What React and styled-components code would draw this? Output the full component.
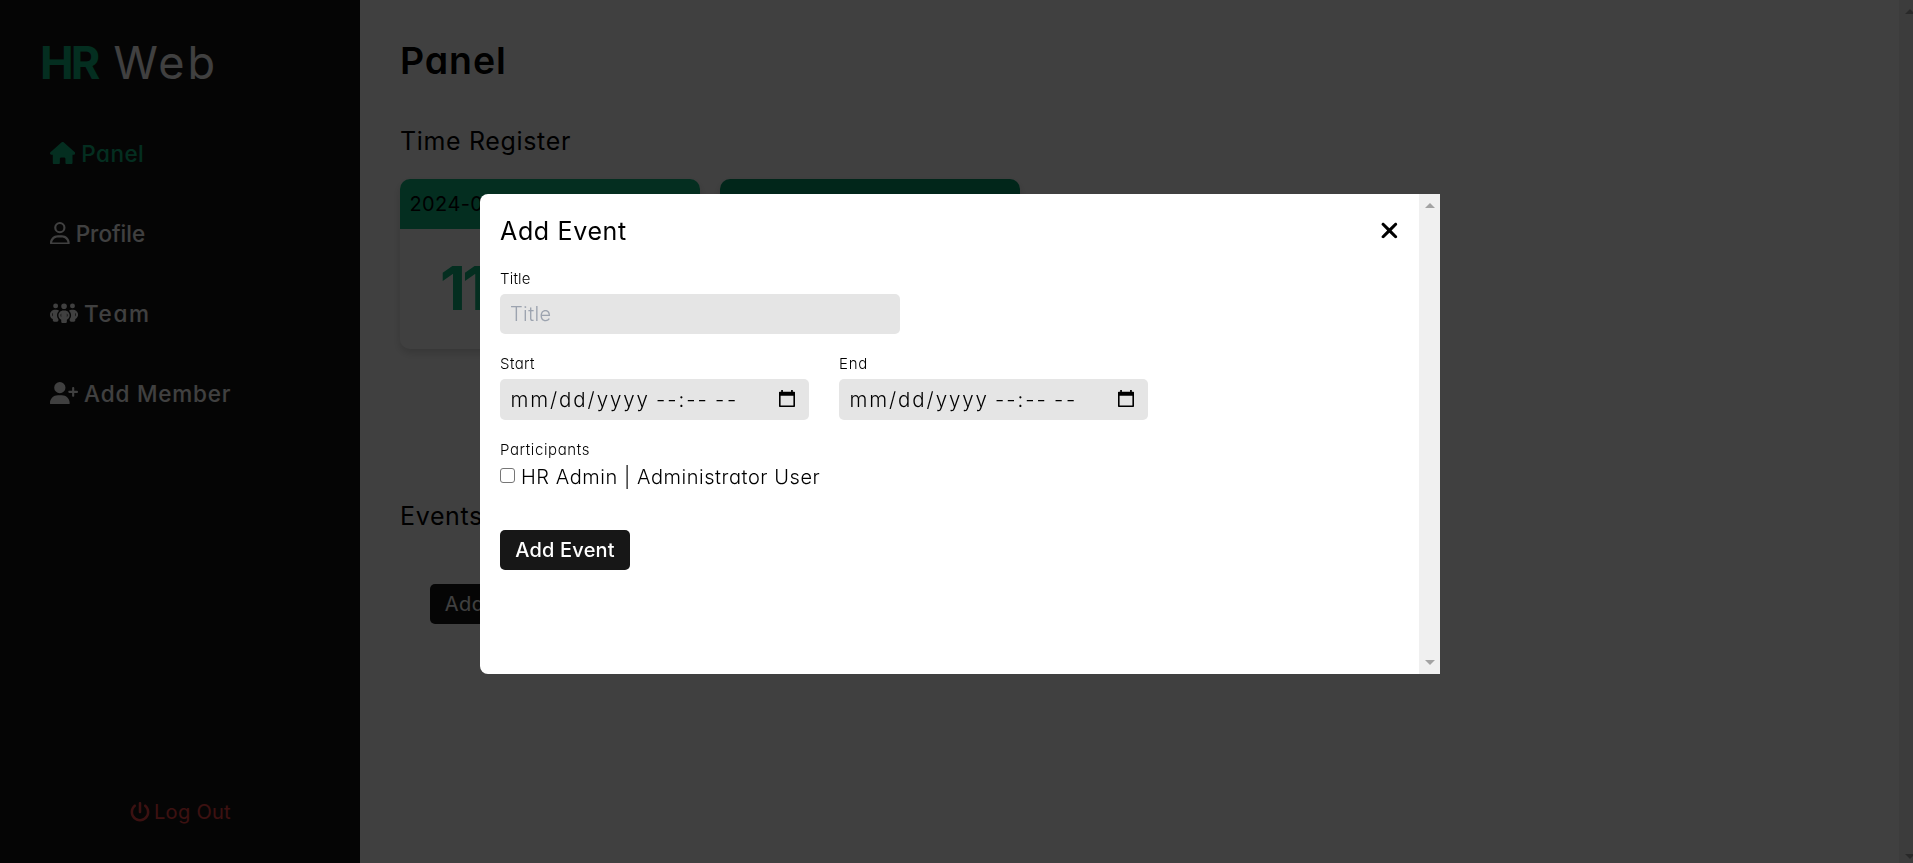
import React from "react";
import styled, { createGlobalStyle, css } from "styled-components";
import { FaHouse, FaRegUser, FaPeopleGroup, FaUserPlus, FaPowerOff, FaXmark } from "react-icons/fa6";

const GlobalStyle = createGlobalStyle`
  *, *::before, *::after { box-sizing: border-box; }
  html, body { margin: 0; height: 100%; overflow: hidden; background: #fff; }
  body {
    font-family: Inter, "Open Sans", sans-serif;
    font-feature-settings: "cv11" 1;
    color: #000;
  }
  h1, h2 { margin: 0; }
`;

const Screen = styled.div`
  display: flex;
  width: 1920px;
  height: 868px;
`;

/* ---------- sidebar ---------- */

const Sidebar = styled.aside`
  display: flex;
  flex-direction: column;
  flex: 0 0 360px;
  padding: 33px 40px 41px;
  background: #171717;
  color: #fff;
`;

const Brand = styled.div`
  display: flex;
  height: 60px;
  margin-bottom: 20px;
  font-size: 45px;
  line-height: 60px;
`;

const BrandMark = styled.span`
  width: 73.5px;
  color: #10b981;
  font-weight: 700;
  letter-spacing: -2.8px;
`;

const BrandName = styled.span`
  letter-spacing: 2.8px;
`;

const Nav = styled.nav`
  display: flex;
  flex-direction: column;
  padding-left: 10px;
`;

const NavItem = styled.a`
  display: flex;
  align-items: center;
  gap: 6px;
  height: 80px;
  color: ${(p) => (p.$active ? "#10b981" : "#fff")};
  font-size: 22.5px;
  font-weight: 500;
  letter-spacing: ${(p) => p.$track}px;
  white-space: nowrap;

  svg {
    flex: none;
    width: ${(p) => p.$iconWidth}px;
    height: 22.5px;
  }
`;

const LogOut = styled.a`
  display: flex;
  align-items: center;
  gap: 4.5px;
  height: 30px;
  margin: auto 0 0 89.5px;
  color: #ef4444;
  font-size: 20px;
  letter-spacing: 0.3px;

  svg { width: 20px; height: 20px; }
`;

/* ---------- main page ---------- */

const Main = styled.main`
  display: flex;
  flex: 1;
  flex-direction: column;
  padding: 33px 40px 0;
`;

const PageTitle = styled.h1`
  margin-bottom: 33px;
  font-size: 37.5px;
  line-height: 56px;
  font-weight: 600;
  letter-spacing: 0.9px;
`;

const SectionTitle = styled.h2`
  font-size: 25px;
  line-height: 38px;
  font-weight: 400;
  letter-spacing: 0.65px;
`;

const CardRow = styled.div`
  display: flex;
  gap: 20px;
  margin: 19px 0 147.5px;
`;

const Card = styled.section`
  width: 300px;
  height: 170px;
  overflow: hidden;
  border-radius: 10px;
  background: #fff;
  box-shadow: 0 4px 8px rgba(0, 0, 0, 0.16);
`;

const CardHeader = styled.div`
  height: 50px;
  padding-left: 9.5px;
  background: ${(p) => p.$color};
  font-size: 20px;
  line-height: 50px;
  letter-spacing: 0.4px;
`;

const CardValue = styled.div`
  padding-left: 40px;
  color: #10b981;
  font-size: 60px;
  font-weight: 700;
  line-height: 118px;
  letter-spacing: -3.5px;
`;

const buttonStyle = css`
  display: block;
  width: 130px;
  height: 40px;
  padding: 0;
  border: 0;
  border-radius: 5px;
  background: #171717;
  color: #fff;
  font-family: inherit;
  font-feature-settings: inherit;
  font-size: 20px;
  white-space: nowrap;
`;

const PageButton = styled.button`
  ${buttonStyle}
  margin: 49px 0 0 30px;
  letter-spacing: 0.4px;
`;

const SubmitButton = styled.button`
  ${buttonStyle}
  margin-top: 38px;
  font-weight: 500;
  letter-spacing: 0.2px;
`;

/* ---------- scrollbars ---------- */

const ScrollTrack = styled.div`
  display: flex;
  flex: 0 0 21px;
  flex-direction: column;
  align-items: center;
  justify-content: space-between;
  padding: 9px 0;
  background: #f0f0f0;
`;

const ScrollArrow = styled.span`
  width: 0;
  height: 0;
  border: 5px solid transparent;
  ${(p) =>
    p.$up
      ? "border-top: 0; border-bottom-color: #a3a3a3;"
      : "border-bottom: 0; border-top-color: #a3a3a3;"}
`;

const Scrollbar = () => (
  <ScrollTrack>
    <ScrollArrow $up />
    <ScrollArrow />
  </ScrollTrack>
);

/* ---------- modal ---------- */

const Overlay = styled.div`
  position: fixed;
  top: 0;
  left: 0;
  display: flex;
  align-items: center;
  justify-content: center;
  width: 1920px;
  height: 868px;
  background: rgba(0, 0, 0, 0.75);
`;

const Modal = styled.div`
  display: flex;
  width: 960px;
  height: 480px;
  overflow: hidden;
  border-radius: 8px 0 0 8px;
  background: #fff;
`;

const ModalBody = styled.form`
  flex: 1;
  padding: 17.5px 20px 0;
`;

const ModalHeader = styled.div`
  display: flex;
  align-items: center;
  justify-content: space-between;
  height: 38px;
  margin-bottom: 18px;

  svg {
    width: 18.75px;
    height: 25px;
  }
`;

const Field = styled.div`
  display: flex;
  flex-direction: column;
  width: ${(p) => p.$width}px;
  margin-bottom: 19px;
`;

const Label = styled.label`
  display: block;
  margin-bottom: 4px;
  font-size: 15px;
  font-weight: 300;
  line-height: 22px;
  letter-spacing: ${(p) => p.$track}px;
`;

const GroupLabel = styled(Label)`
  margin-bottom: 0.5px;
`;

const TextInput = styled.input`
  height: 40px;
  padding: 0 10px;
  border: 0;
  border-radius: 5px;
  background: #e5e5e5;
  font-family: inherit;
  font-feature-settings: inherit;
  font-size: 20px;
  font-weight: 300;
  letter-spacing: 0.4px;

  &::placeholder { color: #9ca3af; opacity: 1; }
`;

const FieldRow = styled.div`
  display: flex;
  gap: 30px;
`;

const DateBox = styled.div`
  display: flex;
  align-items: center;
  height: 41.5px;
  padding: 0 12px 0 10.5px;
  border-radius: 5px;
  background: #e5e5e5;
  font-size: 20.5px;
  font-weight: 300;
  white-space: nowrap;

  svg { margin-left: auto; }
`;

const DatePart = styled.span`
  width: ${(p) => p.$width}px;
  letter-spacing: ${(p) => p.$track}px;
`;

const CheckRow = styled.label`
  display: flex;
  align-items: center;
  height: 30px;
  font-size: 20px;
  font-weight: 300;
  letter-spacing: 0.55px;
`;

const Checkbox = styled.input`
  width: 15px;
  height: 15px;
  margin: 0 6px 3px 0;
  appearance: none;
  border: 1px solid #767676;
  border-radius: 3px;
  background: #fff;
`;

const CalendarIcon = () => (
  <svg width="20" height="20" viewBox="0 0 20 20" fill="none">
    <path d="M2.8 3.5h14.4v13.7H2.8z" stroke="#000" strokeWidth="1.6" strokeLinejoin="round" />
    <path d="M2 3.5h16v3.3H2zM4.2 1h1.7v3H4.2zM14.1 1h1.7v3h-1.7z" fill="#000" />
  </svg>
);

const DateField = ({ label, track }) => (
  <Field $width={309}>
    <Label $track={track}>{label}</Label>
    <DateBox>
      <DatePart $width={145.5} $track={1.9}>mm/dd/yyyy</DatePart>
      <DatePart $width={59} $track={2}>--:--</DatePart>
      <DatePart $width={24} $track={2.6}>--</DatePart>
      <CalendarIcon />
    </DateBox>
  </Field>
);

const links = [
  { label: "Panel", icon: FaHouse, iconWidth: 25.3, track: 0.45, active: true },
  { label: "Profile", icon: FaRegUser, iconWidth: 19.7, track: 0 },
  { label: "Team", icon: FaPeopleGroup, iconWidth: 28.1, track: 1.6 },
  { label: "Add Member", icon: FaUserPlus, iconWidth: 28.1, track: 0.8 },
];

export default function App() {
  return (
    <>
      <GlobalStyle />
      <Screen>
        <Sidebar>
          <Brand>
            <BrandMark>HR</BrandMark>
            <BrandName>Web</BrandName>
          </Brand>
          <Nav>
            {links.map(({ label, icon: Icon, iconWidth, track, active }) => (
              <NavItem key={label} $active={active} $iconWidth={iconWidth} $track={track}>
                <Icon />
                {label}
              </NavItem>
            ))}
          </Nav>
          <LogOut>
            <FaPowerOff />
            Log Out
          </LogOut>
        </Sidebar>
        <Main>
          <PageTitle>Panel</PageTitle>
          <SectionTitle>Time Register</SectionTitle>
          <CardRow>
            <Card>
              <CardHeader $color="#10b981">2024-0</CardHeader>
              <CardValue>11</CardValue>
            </Card>
            <Card>
              <CardHeader $color="#059669" />
            </Card>
          </CardRow>
          <SectionTitle>Events</SectionTitle>
          <PageButton>Add Event</PageButton>
        </Main>
        <Scrollbar />
      </Screen>
      <Overlay>
        <Modal>
          <ModalBody>
            <ModalHeader>
              <SectionTitle>Add Event</SectionTitle>
              <FaXmark />
            </ModalHeader>
            <Field $width={400}>
              <Label $track={0.2}>Title</Label>
              <TextInput placeholder="Title" />
            </Field>
            <FieldRow>
              <DateField label="Start" track={0.4} />
              <DateField label="End" track={0.7} />
            </FieldRow>
            <GroupLabel $track={0.6}>Participants</GroupLabel>
            <CheckRow>
              <Checkbox type="checkbox" />
              HR Admin | Administrator User
            </CheckRow>
            <SubmitButton type="button">Add Event</SubmitButton>
          </ModalBody>
          <Scrollbar />
        </Modal>
      </Overlay>
    </>
  );
}
